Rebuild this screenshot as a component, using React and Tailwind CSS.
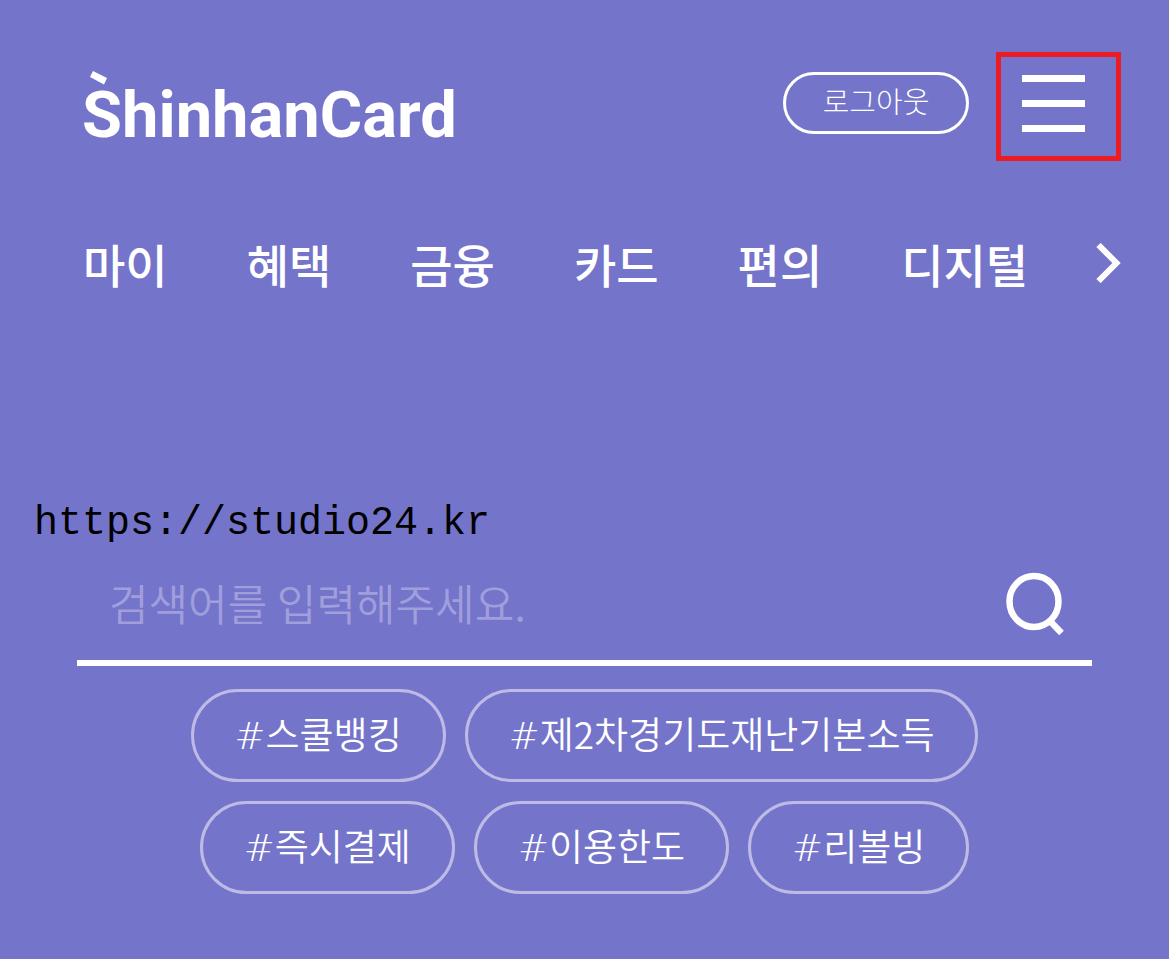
const NAV_LINKS = ['마이', '혜택', '금융', '카드', '편의', '디지털'];

const KEYWORDS = ['스쿨뱅킹', '제2차경기도재난기본소득', '즉시결제', '이용한도', '리볼빙'];

function Logo() {
  return (
    <a href="#home" className="relative mt-[19px] text-[65px] leading-[88px] font-bold font-['Roboto',sans-serif]">
      <svg viewBox="0 0 18 14" className="absolute left-2 top-0 w-[18px] h-[14px]" aria-hidden="true">
        <path d="M3 0 L17 7 L14 13.5 L0 6 Z" fill="currentColor" />
      </svg>
      ShinhanCard
    </a>
  );
}

function Header() {
  return (
    <header className="flex items-start justify-between pl-[82px] pr-12">
      <Logo />
      <div className="flex items-start gap-[27px]">
        <button
          type="button"
          className="mt-5 h-[62px] w-[186px] rounded-full border-3 border-white pb-1.5 text-[29px] leading-none font-light"
        >
          로그아웃
        </button>
        {/* Menu button, outlined in red */}
        <button
          type="button"
          aria-label="전체메뉴"
          className="h-[109px] w-[125px] border-5 border-[#ed1c24] pt-[18px] pl-[21px]"
        >
          <span className="flex h-full w-[63px] flex-col gap-[18px]">
            <span className="h-[7px] bg-white" />
            <span className="h-[7px] bg-white" />
            <span className="h-[7px] bg-white" />
          </span>
        </button>
      </div>
    </header>
  );
}

function Navbar() {
  return (
    <nav className="mt-[68px] flex items-center justify-between pl-[83px] pr-12">
      <div className="flex gap-[79px]">
        {NAV_LINKS.map((label) => (
          <a key={label} href={`#${label}`} className="text-[46px] leading-[68px] font-medium whitespace-nowrap">
            {label}
          </a>
        ))}
      </div>
      <button type="button" aria-label="다음 메뉴">
        <svg viewBox="0 0 25 40" className="h-10 w-[25px]" fill="none" stroke="currentColor" strokeWidth="6">
          <path d="M2.5 2 L20.5 20 L2.5 38" />
        </svg>
      </button>
    </nav>
  );
}

function SearchForm() {
  return (
    <form className="mx-[77px] mt-3" onSubmit={(e) => e.preventDefault()}>
      <div className="flex items-center justify-between border-b-6 border-white pl-8 pr-[26px] pb-[18px]">
        <input
          type="search"
          aria-label="검색어"
          placeholder="검색어를 입력해주세요."
          className="h-[76px] min-w-0 flex-1 bg-transparent pb-1 text-[43px] font-[350] outline-none placeholder:text-[#a09edb]"
        />
        <button type="submit" aria-label="검색">
          <svg viewBox="0 0 60 64" className="h-16 w-[60px]" fill="none" stroke="currentColor" strokeWidth="6.5">
            <ellipse cx="28" cy="29.5" rx="24.5" ry="25.5" />
            <path d="M43 48 L55.5 61" />
          </svg>
        </button>
      </div>
      <div className="mt-[23px] flex flex-wrap justify-center gap-[19px]">
        {KEYWORDS.map((word) => (
          <button
            key={word}
            type="button"
            className="h-[93px] rounded-full border-3 border-[#bdbbe5] px-[41px] pb-0.5 text-[37px] leading-none font-[350]"
          >
            <span className="font-extralight font-['DejaVu_Sans',sans-serif]">#</span>
            {word}
          </button>
        ))}
      </div>
    </form>
  );
}

export default function App() {
  return (
    <div className="min-h-screen bg-[#7474cb] pt-[52px] pb-16 text-white font-['Noto_Sans_CJK_KR',sans-serif]">
      <Header />
      <Navbar />
      <p className="mt-[197px] ml-[34px] text-[40px] leading-[60px] text-black font-['Liberation_Mono',monospace]">
        https://studio24.kr
      </p>
      <SearchForm />
    </div>
  );
}
